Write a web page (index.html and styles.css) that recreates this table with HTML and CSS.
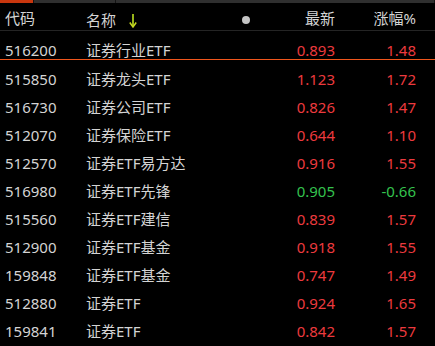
FILE: index.html
```html
<!DOCTYPE html>
<html lang="zh-CN">
<head>
<meta charset="utf-8">
<link rel="stylesheet" href="styles.css">
</head>
<body>
<div class="tabs">
  <div class="tab tab-active"></div>
  <div class="tab tab-mid"></div>
  <div class="tab tab-rest"></div>
</div>
<div class="table">
  <div class="row head">
    <div class="c-code">代码</div>
    <div class="c-name head-name">
      <span>名称</span>
      <svg class="arrow" width="8" height="14" viewBox="0 0 8 14"><path d="M4 0 V12.5" stroke="#bde020" stroke-width="1.6" fill="none"/><path d="M0.8 8.5 L4 13 L7.2 8.5" stroke="#c8d820" stroke-width="1.5" fill="none"/></svg>
      <span class="dot"></span>
    </div>
    <div class="c-num">最新</div>
    <div class="c-num">涨幅%</div>
  </div>
  <div class="row sel"><div class="c-code">516200</div><div class="c-name">证券行业ETF</div><div class="c-num up">0.893</div><div class="c-num up">1.48</div></div>
  <div class="row"><div class="c-code">515850</div><div class="c-name">证券龙头ETF</div><div class="c-num up">1.123</div><div class="c-num up">1.72</div></div>
  <div class="row"><div class="c-code">516730</div><div class="c-name">证券公司ETF</div><div class="c-num up">0.826</div><div class="c-num up">1.47</div></div>
  <div class="row"><div class="c-code">512070</div><div class="c-name">证券保险ETF</div><div class="c-num up">0.644</div><div class="c-num up">1.10</div></div>
  <div class="row"><div class="c-code">512570</div><div class="c-name">证券ETF易方达</div><div class="c-num up">0.916</div><div class="c-num up">1.55</div></div>
  <div class="row"><div class="c-code">516980</div><div class="c-name">证券ETF先锋</div><div class="c-num down">0.905</div><div class="c-num down">-0.66</div></div>
  <div class="row"><div class="c-code">515560</div><div class="c-name">证券ETF建信</div><div class="c-num up">0.839</div><div class="c-num up">1.57</div></div>
  <div class="row"><div class="c-code">512900</div><div class="c-name">证券ETF基金</div><div class="c-num up">0.918</div><div class="c-num up">1.55</div></div>
  <div class="row"><div class="c-code">159848</div><div class="c-name">证券ETF基金</div><div class="c-num up">0.747</div><div class="c-num up">1.49</div></div>
  <div class="row"><div class="c-code">512880</div><div class="c-name">证券ETF</div><div class="c-num up">0.924</div><div class="c-num up">1.65</div></div>
  <div class="row"><div class="c-code">159841</div><div class="c-name">证券ETF</div><div class="c-num up">0.842</div><div class="c-num up">1.57</div></div>
</div>
</body>
</html>
```
FILE: styles.css
```css
html, body {
  margin: 0;
  padding: 0;
  background: #000;
  width: 435px;
  height: 346px;
  overflow: hidden;
}
body {
  font-family: "Noto Sans", "Noto Sans CJK SC", sans-serif;
  font-size: 15px;
  color: #d4d4d4;
}
.tabs {
  display: flex;
  height: 3px;
  gap: 1px;
  background: #141414;
}
.tab-active { width: 33px; background: #c8360e; }
.tab-mid { width: 81px; background: #2f2f2f; }
.tab-rest { flex: 1; background: #2f2f2f; margin-right: 1px; }
.row {
  display: grid;
  grid-template-columns: 81px 169px 80px 81px;
  padding-left: 5px;
  height: 28px;
  box-sizing: border-box;
  padding-top: 11px;
  line-height: 16px;
  white-space: nowrap;
}
.row.head {
  padding-top: 7px;
  border-bottom: 1px solid #242424;
}
.row.sel {
  height: 29px;
  border-bottom: 1px solid #f0561c;
}
.c-num { text-align: right; }
.head-name {
  display: flex;
  align-items: center;
}
.arrow { margin-left: 13px; margin-top: 2px; }
.dot {
  margin-left: auto;
  margin-right: 5px;
  width: 8px;
  height: 8px;
  border-radius: 50%;
  background: #c4c4c4;
}
.up { color: #ec3a3e; }
.down { color: #34c24e; }
```
